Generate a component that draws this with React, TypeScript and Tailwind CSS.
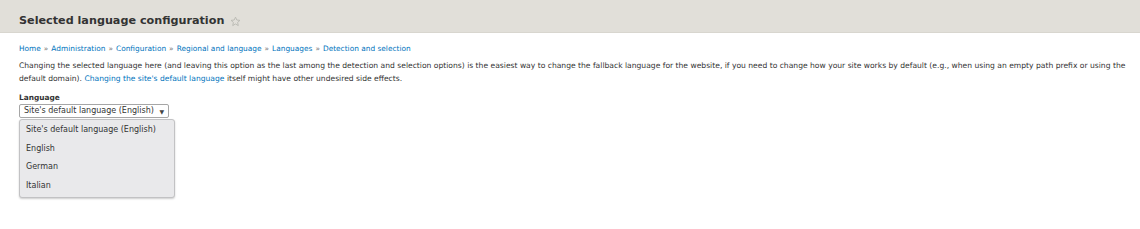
import React from 'react';

const crumbs = ['Home', 'Administration', 'Configuration', 'Regional and language', 'Languages', 'Detection and selection'];
const options = ["Site's default language (English)", 'English', 'German', 'Italian'];

const Star: React.FC = () => (
    <svg width="11" height="11" viewBox="0 0 24 24" fill="none" stroke="#b9b9b2" strokeWidth="2" strokeLinejoin="round">
        <path d="M12 2.5l2.9 6.3 6.8.7-5.1 4.6 1.5 6.8L12 17.4l-6.1 3.5 1.5-6.8-5.1-4.6 6.8-.7z" />
    </svg>
);

export default function App() {
    return (
        <div className="w-[1140px] h-[229px] bg-white text-[#333] overflow-hidden" style={{ fontFamily: '"DejaVu Sans", "Noto Sans", sans-serif' }}>
            <div className="h-[33px] bg-[#e1dfd9] border-b border-[#d8d6cf] flex items-center pl-[19px] pt-[10px] gap-[6px]">
                <h1 className="text-[11.2px] font-bold text-[#333]">Selected language configuration</h1>
                <Star />
            </div>
            <div className="pl-[19px] pr-[8px] pt-[10px]">
                <div className="text-[7.4px] text-[#0074bd] flex gap-[3px]">
                    {crumbs.map((c, i) => (
                        <React.Fragment key={c}>
                            {i > 0 && <span className="text-[#777]">»</span>}
                            <span>{c}</span>
                        </React.Fragment>
                    ))}
                </div>
                <p className="mt-[5px] text-[7.6px] leading-[13px] text-[#333]">
                    Changing the selected language here (and leaving this option as the last among the detection and selection options) is the easiest way to change the fallback language for the website, if you need to change how your site works by default (e.g., when using an empty path prefix or using the default domain). <span className="text-[#0074bd]">Changing the site's default language</span> itself might have other undesired side effects.
                </p>
                <div className="mt-[7px] text-[7.4px] font-bold">Language</div>
                <div className="w-[150px]">
                    <div className="mt-[1px] h-[14px] border border-[#a6a6a6] rounded-[2px] bg-white flex items-center justify-between px-[4px] text-[8px]">
                        <span>Site's default language (English)</span>
                        <span className="text-[6px] text-[#444]">▼</span>
                    </div>
                </div>
                <div className="mt-[1px] w-[156px] bg-[#e9e9eb] border border-[#c2c2c4] rounded-[3px] shadow-[0_1px_2px_rgba(0,0,0,0.2)] pt-[1px] pb-[2px]">
                    {options.map(o => (
                        <div key={o} className="h-[18.5px] flex items-center px-[6px] text-[8px] text-[#333]">{o}</div>
                    ))}
                </div>
            </div>
        </div>
    );
}
